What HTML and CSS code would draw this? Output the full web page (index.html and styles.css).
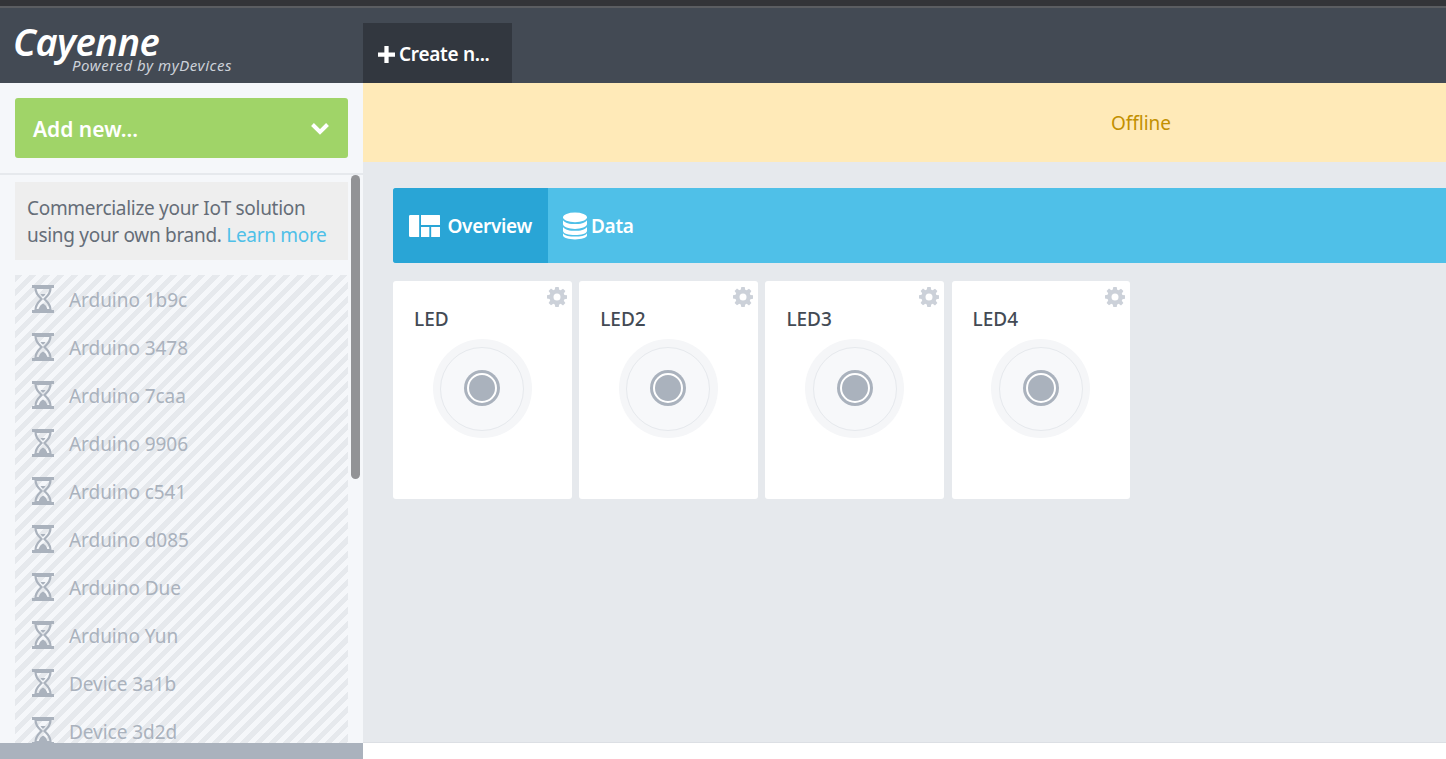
FILE: index.html
```html
<!DOCTYPE html>
<html lang="en">
<head>
  <meta charset="UTF-8">
  <title>Cayenne</title>
  <link rel="stylesheet" href="styles.css">
</head>
<body>
  <svg class="defs" width="0" height="0">
    <symbol id="hourglass" viewBox="0 0 22 28">
      <path d="M0 0h22v3H0zM0 25h22v3H0z" fill="currentColor"/>
      <path d="M3.500 3c0 6 3.500 8.500 6 11-2.500 2.500-6 5-6 11h15c0-6-3.500-8.500-6-11 2.500-2.500 6-5 6-11z" fill="none" stroke="currentColor" stroke-width="2.200"/>
      <path d="M6.500 25c.5-3.500 2.500-5.500 4.500-6.500 2 1 4 3 4.500 6.500zM8.500 9h5c-.5 1-1.300 2-2.500 2.800-1.200-.8-2-1.800-2.500-2.800z" fill="currentColor"/>
    </symbol>
    <symbol id="gear" viewBox="0 0 20 20">
      <path fill-rule="evenodd" d="M8.300 0h3.400l.5 2.700 1.500.6 2.300-1.600 2.400 2.400-1.600 2.300.6 1.500 2.600.4v3.400l-2.600.5-.6 1.500 1.600 2.300-2.400 2.400-2.300-1.600-1.500.6-.5 2.600H8.300l-.5-2.600-1.500-.6L4 18.300l-2.400-2.400 1.600-2.300-.6-1.500-2.600-.5V8.200l2.600-.4.6-1.500L1.600 4 4 1.600l2.300 1.600 1.500-.6zM10 6.500a3.500 3.500 0 1 0 0 7 3.500 3.500 0 0 0 0-7z" fill="currentColor"/>
    </symbol>
  </svg>

  <div class="topstrip"></div>

  <header class="header">
    <div class="brand">
      <div class="logo">Cayenne</div>
      <div class="powered">Powered by myDevices</div>
    </div>
    <div class="create">
      <svg width="17" height="17" viewBox="0 0 16 16"><path d="M6 0h4v6h6v4h-6v6H6v-6H0V6h6z" fill="#fff"/></svg>
      <span>Create n...</span>
    </div>
  </header>

  <div class="layout">
    <aside class="sidebar">
      <div class="addwrap">
        <div class="addnew">
          <span>Add new...</span>
          <svg width="20" height="14" viewBox="0 0 20 14"><path d="M2.500 3.500 10 11l7.500-7.500" fill="none" stroke="#fff" stroke-width="4"/></svg>
        </div>
      </div>
      <div class="scrollarea">
        <div class="promo">Commercialize your IoT solution using your own brand. <a href="#">Learn more</a></div>
        <ul class="devices">
          <li><svg class="hg"><use href="#hourglass"/></svg>Arduino 1b9c</li>
          <li><svg class="hg"><use href="#hourglass"/></svg>Arduino 3478</li>
          <li><svg class="hg"><use href="#hourglass"/></svg>Arduino 7caa</li>
          <li><svg class="hg"><use href="#hourglass"/></svg>Arduino 9906</li>
          <li><svg class="hg"><use href="#hourglass"/></svg>Arduino c541</li>
          <li><svg class="hg"><use href="#hourglass"/></svg>Arduino d085</li>
          <li><svg class="hg"><use href="#hourglass"/></svg>Arduino Due</li>
          <li><svg class="hg"><use href="#hourglass"/></svg>Arduino Yun</li>
          <li><svg class="hg"><use href="#hourglass"/></svg>Device 3a1b</li>
          <li><svg class="hg"><use href="#hourglass"/></svg>Device 3d2d</li>
        </ul>
        <div class="scrollthumb"></div>
      </div>
      <div class="sidefoot"></div>
    </aside>

    <main class="main">
      <div class="alert">Offline</div>
      <div class="content">
        <div class="tabs">
          <div class="tab active">
            <svg width="34" height="24" viewBox="0 0 34 24"><path d="M1.500 0H11v24H1.500A1.500 1.500 0 0 1 0 22.500v-21A1.500 1.500 0 0 1 1.500 0zM13 0h19.500A1.500 1.500 0 0 1 34 1.500V11H13zM13 13h9v11h-9zM24 13h10v9.500a1.500 1.500 0 0 1-1.500 1.500H24z" fill="#fff"/></svg>
            <span>Overview</span>
          </div>
          <div class="tab data">
            <svg width="25" height="28" viewBox="0 0 25 28"><ellipse cx="12.500" cy="5" rx="12.500" ry="5" fill="#fff"/><path d="M0 8c2 3 7 4 12.500 4S23 11 25 8v4c0 3-6 5-12.500 5S0 15 0 12zM0 15c2 3 7 4 12.500 4S23 18 25 15v4c0 3-6 4.500-12.500 4.500S0 22 0 19zM0 21.500c2 3 7 3.500 12.500 3.500S23 24.500 25 21.500V24c0 2.500-6 4-12.500 4S0 26.500 0 24z" fill="#fff"/></svg>
            <span>Data</span>
          </div>
        </div>
        <div class="cards">
          <div class="card">
            <svg class="gear"><use href="#gear"/></svg>
            <div class="card-title">LED</div>
            <div class="dial"><div class="dial-inner"><div class="knob"></div></div></div>
          </div>
          <div class="card">
            <svg class="gear"><use href="#gear"/></svg>
            <div class="card-title">LED2</div>
            <div class="dial"><div class="dial-inner"><div class="knob"></div></div></div>
          </div>
          <div class="card">
            <svg class="gear"><use href="#gear"/></svg>
            <div class="card-title">LED3</div>
            <div class="dial"><div class="dial-inner"><div class="knob"></div></div></div>
          </div>
          <div class="card">
            <svg class="gear"><use href="#gear"/></svg>
            <div class="card-title">LED4</div>
            <div class="dial"><div class="dial-inner"><div class="knob"></div></div></div>
          </div>
        </div>
      </div>
      <div class="mainfoot"></div>
    </main>
  </div>
</body>
</html>
```

FILE: styles.css
```css
* {
  box-sizing: border-box;
}
html, body {
  height: 100%;
}
body {
  display: flex;
  flex-direction: column;
  height: 100vh;
  margin: 0;
  overflow: hidden;
  background-color: #fff;
  font-family: "Noto Sans", "Open Sans", sans-serif;
}
.defs {
  position: absolute;
}
.topstrip {
  flex: none;
  height: 8px;
  background-color: #333438;
  border-bottom: 2px solid #5b5d61;
}

/* header */
.header {
  flex: none;
  display: flex;
  height: 75px;
  background-color: #434a54;
}
.brand {
  width: 363px;
  padding: 11px 0 0 13px;
  color: #fff;
}
.logo {
  font-size: 38px;
  line-height: 44px;
  font-weight: 600;
  font-style: italic;
  letter-spacing: -0.5px;
}
.powered {
  margin: -6px 0 0 59px;
  font-size: 15px;
  line-height: 16px;
  font-style: italic;
  letter-spacing: 0.55px;
  color: #ccd1d9;
}
.create {
  display: flex;
  align-items: center;
  gap: 4px;
  width: 149px;
  margin-top: 15px;
  padding: 2px 0 0 15px;
  background-color: #32373f;
  color: #fff;
  font-size: 19px;
  font-weight: 600;
  letter-spacing: -0.3px;
  white-space: nowrap;
}

.layout {
  flex: 1;
  display: flex;
  min-height: 0;
}

/* sidebar */
.sidebar {
  flex: none;
  display: flex;
  flex-direction: column;
  width: 363px;
  background-color: #f5f7fa;
}
.addwrap {
  flex: none;
  height: 92px;
  padding: 15px 15px 0;
  border-bottom: 2px solid #e6e9ed;
}
.addnew {
  display: flex;
  align-items: center;
  justify-content: space-between;
  height: 60px;
  padding: 2px 18px 0;
  background-color: #a0d468;
  border-radius: 3px;
  color: #fff;
  font-size: 21px;
  font-weight: 600;
}
.addnew svg {
  margin-top: -2px;
}
.scrollarea {
  position: relative;
  flex: 1;
  min-height: 0;
  overflow: hidden;
  padding: 7px 15px 0;
}
.scrollthumb {
  position: absolute;
  top: 0;
  left: 351px;
  width: 9px;
  height: 304px;
  background-color: #929396;
  border-radius: 5px;
}
.promo {
  height: 78px;
  padding: 13px 12px;
  background-color: #eeeeee;
  color: #656d78;
  font-size: 19px;
  line-height: 27px;
  letter-spacing: -0.3px;
}
.promo a {
  color: #4fc0e8;
  text-decoration: none;
}
.devices {
  margin: 15px 0 0;
  padding: 0;
  list-style: none;
  background-image: repeating-linear-gradient(135deg, #e6e9ed 0, #e6e9ed 5px, #f5f7fa 5px, #f5f7fa 10px);
}
.devices li {
  display: flex;
  align-items: center;
  height: 48px;
  padding: 2px 0 0 17px;
  color: #aab2bd;
  font-size: 19px;
  letter-spacing: -0.05px;
}
.hg {
  width: 22px;
  height: 28px;
  margin: -2px 15px 0 0;
  color: #aab2bd;
}
.sidefoot {
  flex: none;
  height: 16px;
  background-color: #aab2bd;
}

/* main */
.main {
  flex: 1;
  display: flex;
  flex-direction: column;
  min-width: 0;
  overflow: hidden;
  background-color: #e6e9ed;
}
.alert {
  flex: none;
  width: 1556px;
  height: 79px;
  padding-top: 1px;
  line-height: 79px;
  background-color: #ffeab8;
  color: #c29000;
  font-size: 19px;
  text-align: center;
}
.content {
  flex: 1;
  padding: 26px 0 0 30px;
}
.tabs {
  display: flex;
  height: 75px;
  background-color: #4fc0e8;
  border-radius: 3px 0 0 3px;
}
.tab {
  display: flex;
  align-items: center;
  gap: 7px;
  padding: 0 16px;
  color: #fff;
  font-size: 19px;
  font-weight: 600;
  letter-spacing: -0.3px;
}
.tab.data {
  gap: 4px;
  padding-left: 15px;
}
.tab.data svg {
  width: 24px;
}
.tab.active {
  width: 155px;
  background-color: #29a5d6;
  border-radius: 3px 0 0 3px;
}
.cards {
  display: flex;
  gap: 7.6px;
  margin-top: 18px;
}
.card {
  position: relative;
  width: 178.6px;
  height: 218px;
  padding: 25px 0 0 21px;
  background-color: #fff;
  border-radius: 3px;
}
.gear {
  position: absolute;
  top: 6px;
  right: 5px;
  width: 20px;
  height: 20px;
  color: #ccd1d9;
}
.card-title {
  color: #434a54;
  font-size: 19px;
  line-height: 26px;
  font-weight: 500;
}
.dial {
  display: flex;
  align-items: center;
  justify-content: center;
  width: 99px;
  height: 99px;
  margin: 7px 0 0 18.8px;
  background-color: #f5f6f8;
  border-radius: 50%;
}
.dial-inner {
  display: flex;
  align-items: center;
  justify-content: center;
  width: 84px;
  height: 84px;
  background-color: #f7f8fa;
  border: 1px solid #e6e9ed;
  border-radius: 50%;
}
.knob {
  width: 30px;
  height: 30px;
  margin: 0 0 1px 0;
  background-color: #aab2bd;
  border: 2px solid #fff;
  border-radius: 50%;
  box-shadow: 0 0 0 3px #aab2bd;
}
.mainfoot {
  flex: none;
  height: 17px;
  background-color: #fff;
  border-top: 1px solid #dcdfe4;
}
```
